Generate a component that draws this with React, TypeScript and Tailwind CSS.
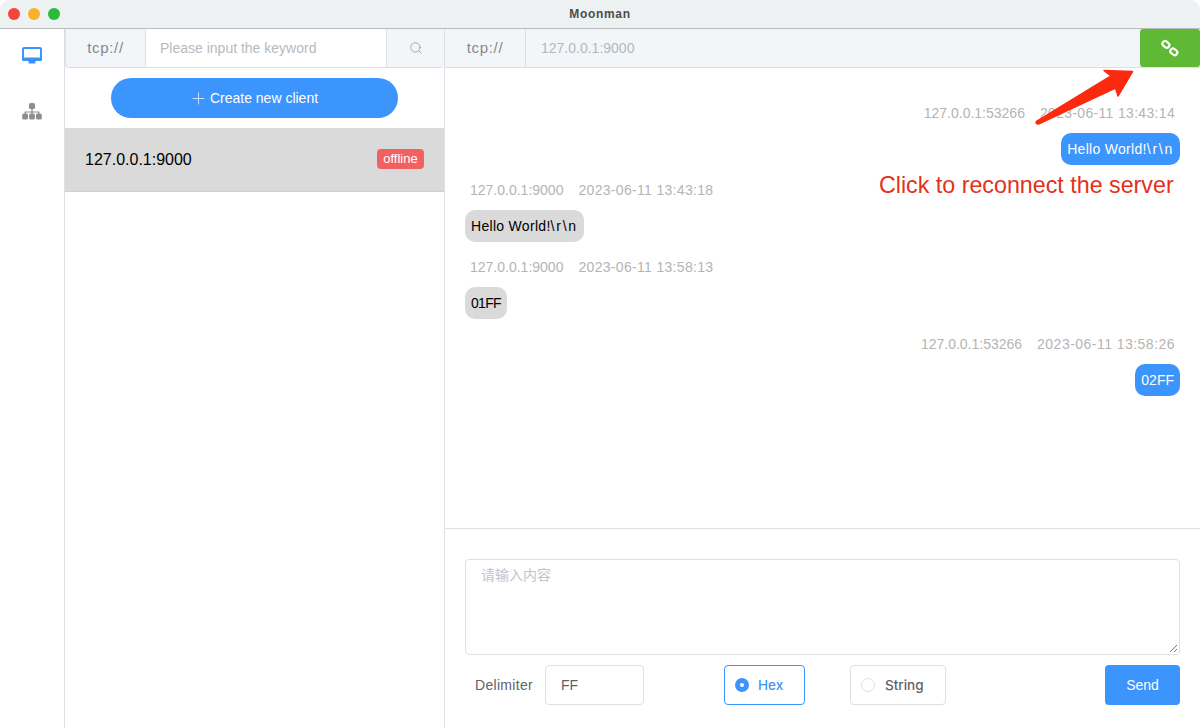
import React from 'react'
import { Search, Plus } from 'lucide-react'

const sans = '[font-family:"Liberation_Sans","Noto_Sans_CJK_SC",sans-serif]'

function MonitorIcon() {
  return (
    <svg width="20" height="18" viewBox="0 0 20 18" fill="none">
      <rect x="1" y="1" width="18" height="12" rx="1" fill="#fff" stroke="#3c94fd" strokeWidth="2" />
      <rect x="0" y="10.5" width="20" height="3.5" rx="1" fill="#3c94fd" />
      <rect x="6.5" y="14" width="7" height="2.5" rx="0.5" fill="#3c94fd" />
    </svg>
  )
}

function TreeIcon() {
  return (
    <svg width="20" height="18" viewBox="0 0 20 18" fill="#8e8e8e">
      <rect x="7" y="0" width="6" height="6" rx="1.5" />
      <rect x="9.4" y="5" width="1.2" height="6" />
      <path d="M2.6 11V8.4h14.8V11h-1.2V9.6H3.8V11z" />
      <rect x="0.2" y="10.6" width="5.8" height="6" rx="1.5" />
      <rect x="7.1" y="10.6" width="5.8" height="6" rx="1.5" />
      <rect x="14" y="10.6" width="5.8" height="6" rx="1.5" />
    </svg>
  )
}

function LinkIcon() {
  return (
    <svg width="18" height="18" viewBox="0 0 18 18" fill="none" stroke="#fff" strokeWidth="2.2">
      <rect x="1.2" y="2.8" width="7.4" height="5.2" rx="2.6" transform="rotate(40 4.9 5.4)" />
      <rect x="9.1" y="10.2" width="7.4" height="5.2" rx="2.6" transform="rotate(40 12.8 12.8)" />
    </svg>
  )
}

function Meta({ addr, time, right, timeClass = 'tracking-[0.32px]' }: { addr: string; time: string; right?: boolean; timeClass?: string }) {
  return (
    <div className={`flex gap-[15px] text-[14px] leading-[20px] text-[#b4b4b4] ${right ? 'justify-end pr-[5px]' : 'pl-[5px]'}`}>
      <span>{addr}</span>
      <span className={timeClass}>{time}</span>
    </div>
  )
}

function Bubble({ children, right }: { children: React.ReactNode; right?: boolean }) {
  return (
    <div className={`mt-[10px] h-[32px] w-fit rounded-[10px] px-[6px] text-[14px] leading-[32px] ${right ? 'ml-auto bg-[#3c94fd] text-white' : 'bg-[#dadada] text-black'}`}>
      {children}
    </div>
  )
}

function HelloText() {
  return (
    <span className="tracking-[0.3px]">
      Hello World!<span className="tracking-[1.75px]">\r\n</span>
    </span>
  )
}

export default function App() {
  return (
    <div className={`relative flex h-[728px] w-[1200px] flex-col overflow-hidden rounded-[10px] bg-white ${sans}`}>
      {/* title bar */}
      <div className="relative flex h-[29px] shrink-0 items-center justify-center border-b border-[#b9bcbf] bg-[#edf1f1]">
        <div className="absolute left-[8px] top-[8px] flex gap-[8px]">
          <span className="h-[12px] w-[12px] rounded-full bg-[#f5443c]" />
          <span className="h-[12px] w-[12px] rounded-full bg-[#f9b02c]" />
          <span className="h-[12px] w-[12px] rounded-full bg-[#2bbb3a]" />
        </div>
        <span className="text-[12px] font-bold tracking-[0.7px] text-[#4c4c4c]">Moonman</span>
      </div>

      <div className="flex min-h-0 flex-1">
        {/* side nav */}
        <div className="flex w-[65px] shrink-0 flex-col items-center gap-[38px] border-r border-[#dcdfe6] pt-[18px]">
          <MonitorIcon />
          <TreeIcon />
        </div>

        {/* client list */}
        <div className="flex w-[380px] shrink-0 flex-col border-r border-[#dcdfe6]">
          <div className="flex h-[39px] rounded-b-[4px] border-b border-[#dcdfe6] text-[14px]">
            <div className="flex w-[81px] items-center justify-center rounded-bl-[4px] border-x border-[#dcdfe6] bg-[#f3f6f9] text-[15px] tracking-[0.7px] text-[#85888e]">tcp://</div>
            <div className="flex flex-1 items-center pl-[14px] text-[#b8bac0]">Please input the keyword</div>
            <div className="flex w-[58px] items-center justify-center border-l border-[#dcdfe6] bg-[#f3f6f9]">
              <Search size={14} strokeWidth={1.2} className="text-[#85888e]" />
            </div>
          </div>
          <div className="flex justify-center pt-[10px]">
            <div className="flex h-[40px] w-[287px] items-center justify-center gap-[2px] rounded-full bg-[#3c94fd] pr-[2px] text-[14px] text-white">
              <Plus size={19} strokeWidth={0.9} />
              <span>Create new client</span>
            </div>
          </div>
          <div className="mt-[10px] flex h-[64px] items-center justify-between border-b border-[#d0d0d0] bg-[#dadada] pl-[20px] pr-[20px]">
            <span className="text-[16px] text-black">127.0.0.1:9000</span>
            <span className="-mt-[2px] flex h-[20px] w-[47px] items-center justify-center rounded-[4px] bg-[#f26161] text-[13px] text-white">offline</span>
          </div>
        </div>

        {/* chat */}
        <div className="flex min-w-0 flex-1 flex-col">
          <div className="flex h-[39px] shrink-0 border-b border-[#dcdfe6] bg-[#f3f6f9] text-[14px]">
            <div className="flex w-[81px] items-center justify-center border-r border-[#dcdfe6] text-[15px] tracking-[0.7px] text-[#85888e]">tcp://</div>
            <div className="flex flex-1 items-center pl-[15px] text-[#b4b6bc]">127.0.0.1:9000</div>
            <div className="flex w-[60px] items-center justify-center rounded-[3px] bg-[#5fb935]">
              <LinkIcon />
            </div>
          </div>

          <div className="h-[461px] shrink-0 border-b border-[#dcdfe6] px-[20px] pt-[35px]">
            <Meta addr="127.0.0.1:53266" time="2023-06-11 13:43:14" right />
            <Bubble right><HelloText /></Bubble>
            <div className="mt-[15px]">
              <Meta addr="127.0.0.1:9000" time="2023-06-11 13:43:18" />
            </div>
            <Bubble><HelloText /></Bubble>
            <div className="mt-[15px]">
              <Meta addr="127.0.0.1:9000" time="2023-06-11 13:58:13" />
            </div>
            <Bubble><span className="tracking-[-0.7px]">01FF</span></Bubble>
            <div className="mt-[15px]">
              <Meta addr="127.0.0.1:53266" time="2023-06-11 13:58:26" timeClass="tracking-[0.47px]" right />
            </div>
            <Bubble right>02FF</Bubble>
          </div>

          <div className="flex flex-1 flex-col px-[20px] pt-[30px]">
            <div className="relative h-[96px] rounded-[4px] border border-[#dcdfe6] px-[15px] py-[5px] text-[14px] leading-[20px] text-[#c0c4cc]">
              请输入内容
              <svg className="absolute bottom-[1px] right-[1px]" width="9" height="9" viewBox="0 0 9 9" stroke="#777" strokeWidth="1">
                <path d="M1 8L8 1M5 8L8 5" />
              </svg>
            </div>
            <div className="mt-[10px] flex h-[40px] items-center text-[14px]">
              <span className="ml-[10px] w-[70px] tracking-[0.3px] text-[#606266]">Delimiter</span>
              <div className="flex h-[40px] w-[99px] items-center rounded-[4px] border border-[#dcdfe6] pl-[15px] text-[#606266]">FF</div>
              <div className="ml-[80px] flex h-[40px] w-[81px] items-center gap-[9px] rounded-[4px] border border-[#3c94fd] pl-[10px] font-['Inter'] text-[13.5px] font-medium text-[#3c94fd]">
                <span className="flex h-[14px] w-[14px] items-center justify-center rounded-full bg-[#3c94fd]">
                  <span className="h-[4px] w-[4px] rounded-full bg-white" />
                </span>
                Hex
              </div>
              <div className="ml-[45px] flex h-[40px] w-[96px] items-center gap-[10px] rounded-[4px] border border-[#dcdfe6] pl-[10px] font-['Inter'] text-[13.5px] font-medium text-[#606266]">
                <span className="h-[14px] w-[14px] rounded-full border border-[#dcdfe6]" />
                String
              </div>
              <div className="ml-auto flex h-[40px] w-[75px] items-center justify-center rounded-[4px] bg-[#3c94fd] text-white">Send</div>
            </div>
          </div>
        </div>
      </div>

      {/* annotation over the screenshot */}
      <svg className="absolute left-[1030px] top-[66px]" width="106" height="62" viewBox="0 0 106 62" fill="#fb2a0f" stroke="#fb2a0f" strokeWidth="1.5" strokeLinejoin="round">
        <path d="M6.5 55.5L81 10L74 4.5L102.5 5.5L88 30L85.5 22L8.5 58Q5 58 6.5 55.5Z" />
      </svg>
      <div className="absolute left-[879px] top-[170px] text-[23.25px] leading-[30px] text-[#e5301a]">Click to reconnect the server</div>
    </div>
  )
}
